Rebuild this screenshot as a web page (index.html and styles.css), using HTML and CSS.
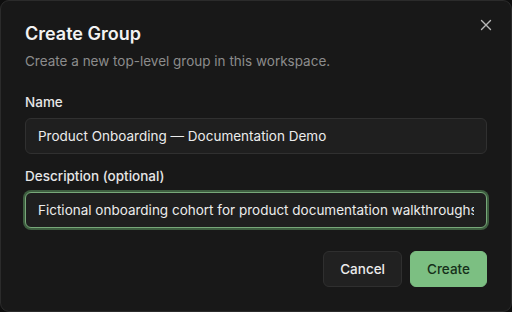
FILE: index.html
```html
<!DOCTYPE html>
<html>
<head>
  <meta charset="utf-8">
  <title>Create Group</title>
  <link rel="stylesheet" href="styles.css">
</head>
<body>
  <div class="dialog">
    <button class="close" aria-label="Close">
      <svg width="12" height="12" viewBox="0 0 12 12"><path d="M1.5 1.5l9 9M10.5 1.5l-9 9" stroke="currentColor" stroke-width="1.4" stroke-linecap="round"/></svg>
    </button>

    <h1 class="title">Create Group</h1>
    <p class="subtitle">Create a new top-level group in this workspace.</p>

    <div class="field">
      <label class="label">Name</label>
      <input class="input" type="text" value="Product Onboarding — Documentation Demo">
    </div>

    <div class="field">
      <label class="label">Description (optional)</label>
      <input class="input focused" type="text" value="Fictional onboarding cohort for product documentation walkthroughs">
    </div>

    <div class="actions">
      <button class="btn btn-cancel">Cancel</button>
      <button class="btn btn-create">Create</button>
    </div>
  </div>
</body>
</html>
```

FILE: styles.css
```css
* {
  box-sizing: border-box;
}

html, body {
  margin: 0;
  height: 100%;
  background-color: #0e0e0e;
}

body {
  font-family: Inter, "Noto Sans", sans-serif;
}

.dialog {
  position: relative;
  height: 312px;
  background-color: #181818;
  border: 1px solid #2b2b2b;
  border-radius: 9px;
  padding: 21px 24px 24px;
  display: flex;
  flex-direction: column;
}

.close {
  position: absolute;
  top: 17px;
  right: 18px;
  width: 14px;
  height: 14px;
  padding: 0;
  border: 0;
  background: none;
  color: #b8b8b8;
  display: flex;
  align-items: center;
  justify-content: center;
}

.title {
  margin: 0;
  font-size: 18px;
  font-weight: 600;
  line-height: 24px;
  color: #f2f2f2;
}

.subtitle {
  margin: 6px 0 0;
  font-size: 13.5px;
  line-height: 18px;
  color: #8c8c8c;
}

.field {
  display: flex;
  flex-direction: column;
  gap: 8px;
  margin-top: 24px;
}
.field + .field {
  margin-top: 14px;
}

.label {
  font-size: 13.5px;
  font-weight: 500;
  line-height: 16px;
  color: #e6e6e6;
}

.input {
  height: 36px;
  width: 100%;
  padding: 0 12px;
  border: 1px solid #303030;
  border-radius: 6px;
  background-color: #1f1f1f;
  color: #ececec;
  font-family: Inter, "Noto Sans", sans-serif;
  font-size: 13.5px;
  outline: none;
}
.input.focused {
  border-color: #77a879;
  box-shadow: 0 0 0 2px #3e5e40;
}

.actions {
  display: flex;
  justify-content: flex-end;
  gap: 8px;
  margin-top: auto;
}

.btn {
  height: 36px;
  padding: 0 16px;
  border-radius: 6px;
  font-family: Inter, "Noto Sans", sans-serif;
  font-size: 13.5px;
  font-weight: 500;
}
.btn-cancel {
  background-color: #212121;
  border: 1px solid #2f2f2f;
  color: #ececec;
}
.btn-create {
  background-color: #7cbf82;
  border: 1px solid #7cbf82;
  color: #16301a;
}
```
